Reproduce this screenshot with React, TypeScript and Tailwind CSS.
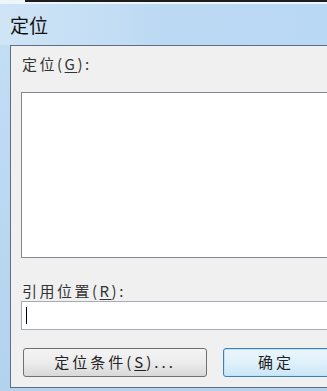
import React from "react";

const font = { fontFamily: '"Noto Sans CJK SC", "Noto Sans", sans-serif' };

export default function App() {
  return (
    <div
      className="w-[327px] h-[391px] overflow-hidden flex flex-col bg-gradient-to-b from-[#c4dff5] to-[#b3d2ee]"
      style={font}
    >
      {/* top strip */}
      <div className="h-[4px] flex bg-[#eef5fb]">
        <div className="w-[25px]" />
        <div className="flex-1 h-[2px] bg-[#1d1d1d]" />
      </div>
      {/* title bar */}
      <div className="h-[41px] flex items-center pl-[10px] bg-gradient-to-r from-[#d0e5f6] via-[#bcd9f3] to-[#b9d8f4]">
        <span className="text-[19px] leading-none text-[#111] tracking-[0px]">定位</span>
      </div>
      {/* body */}
      <div className="flex">
        <div className="w-[10px] shrink-0" />
        <div className="w-[360px] shrink-0 h-[343px] bg-[#f0f0f0] border-l border-t border-b border-[#5f6e80] pl-[10px] flex flex-col">
          <div className="h-[46px] pt-[8px] pl-[1px] text-[15px] leading-[20px] text-[#333] tracking-[2.5px]">
            定位(<span className="underline underline-offset-2">G</span>):
          </div>
          <div className="h-[166px] bg-white border border-[#828790]" />
          <div className="h-[43px] flex items-end pl-[1px] text-[15px] leading-[20px] text-[#333] tracking-[2.5px]">
            引用位置(<span className="underline underline-offset-2">R</span>):
          </div>
          <div className="h-[29px] bg-white border border-[#a5acb5] flex items-center pl-[4px]">
            <div className="w-[1px] h-[17px] bg-black" />
          </div>
          <div className="flex gap-[16px] mt-[18px] pl-[2px]">
            <div className="w-[184px] h-[29px] rounded-[3px] border border-[#707070] bg-gradient-to-b from-[#f4f4f4] via-[#ececec] to-[#d8d8d8] flex items-center justify-center text-[15px] text-[#222] tracking-[3px]">
              定位条件(<span className="underline underline-offset-2">S</span>)...
            </div>
            <div className="w-[130px] h-[29px] rounded-[3px] border border-[#3c7fb1] bg-gradient-to-b from-[#eaf6fd] via-[#e0f1fb] to-[#c9e6f7] flex items-center justify-start pl-[34px] text-[15px] text-[#222] tracking-[3px] shadow-[inset_0_0_0_1px_#bfe3f7]">
              确定
            </div>
          </div>
        </div>
      </div>
    </div>
  );
}
